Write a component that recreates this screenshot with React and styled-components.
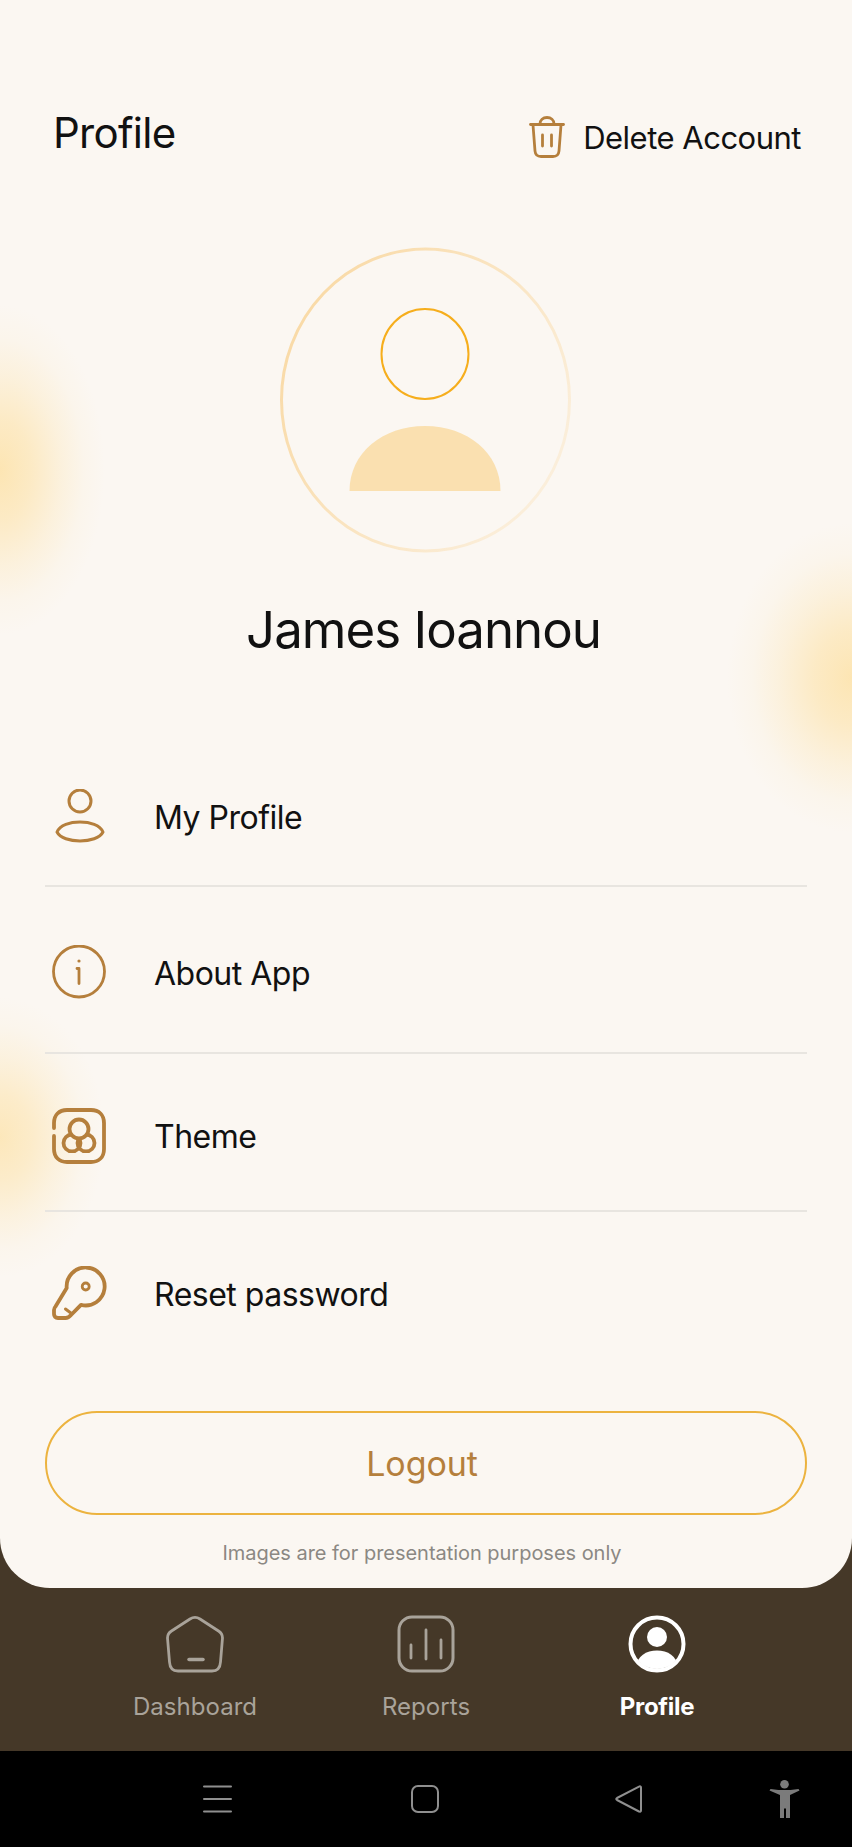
import React from 'react';
import styled, { createGlobalStyle } from 'styled-components';

const GlobalStyle = createGlobalStyle`
  html, body {
    margin: 0;
    padding: 0;
    background: #000;
  }
  body {
    font-family: Inter, "Liberation Sans", sans-serif;
  }
`;

const Page = styled.div`
  width: 852px;
  height: 1847px;
  display: flex;
  flex-direction: column;
  background: #453828;
  overflow: hidden;
`;

const blob = (w, h, x, y, a) => `radial-gradient(ellipse ${w}px ${h}px at ${x} ${y}px,
  rgba(253, 226, 168, ${a}) 0%,
  rgba(253, 226, 168, ${a * 0.72}) 30%,
  rgba(253, 226, 168, ${a * 0.34}) 58%,
  rgba(253, 226, 168, ${a * 0.1}) 80%,
  rgba(253, 226, 168, 0) 100%)`;

const Card = styled.main`
  height: 1588px;
  box-sizing: border-box;
  padding: 104px 45px 0;
  border-radius: 0 0 50px 50px;
  display: flex;
  flex-direction: column;
  background:
    ${blob(105, 165, '0', 470, 0.85)},
    ${blob(125, 155, '852px', 678, 0.85)},
    ${blob(105, 140, '0', 1137, 0.75)},
    #fbf7f2;
`;

const Header = styled.header`
  display: flex;
  justify-content: space-between;
  height: 60px;
  padding-left: 8px;
`;

const Title = styled.h1`
  margin: 0;
  font-size: 42px;
  line-height: 58px;
  font-weight: 400;
  letter-spacing: -0.7px;
  color: #111;
`;

const DeleteButton = styled.button`
  display: flex;
  align-items: center;
  gap: 18px;
  height: 66px;
  margin-right: 6px;
  padding: 0;
  border: 0;
  background: none;
  font: inherit;
  font-size: 31px;
  letter-spacing: -0.5px;
  color: #111;
`;

const AvatarWrap = styled.div`
  display: flex;
  justify-content: center;
  margin-top: 83px;
`;

const Name = styled.h2`
  margin: 47px 5px 0 0;
  text-align: center;
  font-size: 51px;
  line-height: 60px;
  font-weight: 400;
  letter-spacing: -1px;
  color: #111;
`;

const Menu = styled.nav`
  margin-top: 91px;
  display: flex;
  flex-direction: column;
`;

const Row = styled.div`
  height: ${(p) => p.$height}px;
  box-sizing: border-box;
  padding-top: ${(p) => p.$top}px;
  padding-bottom: ${(p) => p.$bottom}px;
  display: flex;
  align-items: center;
  border-bottom: ${(p) => (p.$last ? 'none' : '2px solid #e8e5e0')};
`;

const RowIcon = styled.span`
  width: 109px;
  padding-left: 7px;
  box-sizing: border-box;
  display: flex;
  flex-shrink: 0;
`;

const RowLabel = styled.span`
  font-size: 32px;
  letter-spacing: -0.5px;
  color: #111;
`;

const LogoutButton = styled.button`
  height: 104px;
  margin-top: 33px;
  padding: 0 8px 0 0;
  border: 2px solid #ecb33f;
  border-radius: 52px;
  background: none;
  font: inherit;
  font-size: 34px;
  letter-spacing: -0.1px;
  color: #b57f3c;
`;

const Disclaimer = styled.p`
  margin: 24px 8px 0 0;
  text-align: center;
  font-size: 20px;
  line-height: 28px;
  letter-spacing: -0.03px;
  color: #8b8883;
`;

const BottomNav = styled.div`
  height: 163px;
  display: flex;
  justify-content: center;
  padding-top: 27px;
  box-sizing: border-box;
`;

const NavItem = styled.div`
  width: 231px;
  display: flex;
  flex-direction: column;
  align-items: center;
  gap: 18px;
  color: ${(p) => (p.$active ? '#fff' : '#a9a39a')};
  font-size: 24px;
  line-height: 32px;
  font-weight: ${(p) => (p.$active ? 700 : 400)};
  letter-spacing: ${(p) => (p.$active ? '-0.3px' : '0.05px')};
`;

const SystemBar = styled.div`
  flex: 1;
  background: #000;
  display: flex;
  align-items: center;
  padding-left: 203px;
`;

const SystemButton = styled.span`
  display: flex;
  margin-left: ${(p) => p.$left}px;
`;

const BRONZE = '#b57f3c';

const Stroke = ({ size = 56, color = BRONZE, width = 3, children, w, h }) => (
  <svg
    width={w || size}
    height={h || size}
    viewBox={`0 0 ${w || size} ${h || size}`}
    fill="none"
    stroke={color}
    strokeWidth={width}
    strokeLinecap="round"
    strokeLinejoin="round"
  >
    {children}
  </svg>
);

const TrashIcon = () => (
  <Stroke w={36} h={42} width={2.8}>
    <path d="M1.5 8.5h33" />
    <path d="M11 8c0-4 3-6.500 7-6.500s7 2.500 7 6.500" />
    <path d="M4 9l2 26c.3 3.500 2.500 5.500 6 5.500h12c3.500 0 5.700-2 6-5.500l2-26" />
    <path d="M13.500 19v11M22.500 19v11" />
  </Stroke>
);

const Avatar = () => (
  <svg width="292" height="306" viewBox="0 0 292 306">
    <defs>
      <linearGradient id="ring" x1="0" y1="0.2" x2="1" y2="0.8">
        <stop offset="0" stopColor="#f9d9a4" />
        <stop offset="1" stopColor="#fbf0df" />
      </linearGradient>
    </defs>
    <ellipse cx="145.500" cy="153" rx="144" ry="151" fill="none" stroke="url(#ring)" strokeWidth="3" />
    <ellipse cx="145" cy="107" rx="43.500" ry="45" fill="none" stroke="#f6ae1d" strokeWidth="2" />
    <path d="M69.500 244c0-38 33-65 75.500-65s75.500 27 75.500 65z" fill="#fae0b0" />
  </svg>
);

const UserIcon = () => (
  <Stroke>
    <circle cx="28" cy="12" r="11" />
    <path d="M5 43C8 36 18 33 28 33s20 3 23 10c-3 6-13 9-23 9S8 49 5 43z" />
  </Stroke>
);

const InfoIcon = () => (
  <Stroke width={2.8}>
    <circle cx="27" cy="26.500" r="25.500" />
    <circle cx="27" cy="16" r="1.600" fill={BRONZE} stroke="none" />
    <path d="M25 23.500h2v15" />
  </Stroke>
);

const ThemeIcon = () => (
  <Stroke width={3.8}>
    <defs>
      <mask id="theme-top">
        <rect width="56" height="56" fill="#fff" stroke="none" />
        <circle cx="27" cy="21" r="9.500" fill="#000" stroke="none" />
      </mask>
    </defs>
    <path d="M2 20v-5C2 7 7 2 15 2h24c8 0 13 5 13 13v26c0 8-5 13-13 13H15C7 54 2 49 2 41V28" />
    <circle cx="27" cy="21" r="9.500" />
    <g mask="url(#theme-top)">
      <circle cx="20" cy="35" r="8.500" />
      <circle cx="34" cy="35" r="8.500" />
    </g>
  </Stroke>
);

const KeyIcon = () => (
  <Stroke width={3.8}>
    <path d="M14.700 22A19 19 0 1 1 29 38.900L19 49Q16.500 52 13.500 52H6Q2 52 2 48V44Q2 42 3.500 40.500z" />
    <circle cx="33.700" cy="20.500" r="3.500" strokeWidth="2.800" />
    <path d="M13.500 43l6 4.500" strokeWidth="3" />
  </Stroke>
);

const HomeIcon = () => (
  <Stroke size={58} color="#a9a39a" width={2.800}>
    <path d="M24 4Q29 .8 34 4L52.500 16Q56.500 18.500 56.500 23L54.500 47Q54 56 46 56H12Q4 56 3.500 47L1.500 23Q1.500 18.500 5.500 16z" />
    <path d="M23 44.500h14" strokeWidth="3.500" />
  </Stroke>
);

const ChartIcon = () => (
  <Stroke size={58} color="#a9a39a" width={3}>
    <rect x="2" y="2" width="54" height="54" rx="13" />
    <path d="M14 30v13M29 15v29M44 25v18" strokeWidth="2.800" />
  </Stroke>
);

const ProfileNavIcon = () => (
  <svg width="58" height="58" viewBox="0 0 58 58">
    <defs>
      <clipPath id="inner">
        <circle cx="29" cy="29" r="25" />
      </clipPath>
    </defs>
    <circle cx="29" cy="29" r="26.500" fill="none" stroke="#fff" strokeWidth="4" />
    <circle cx="29" cy="22" r="10" fill="#fff" />
    <ellipse cx="29" cy="50" rx="20" ry="14.500" fill="#fff" clipPath="url(#inner)" />
  </svg>
);

const MenuGlyph = () => (
  <Stroke w={29} h={28} color="#8f8f8f" width={2}>
    <path d="M1 1.500h27M1 14h27M1 26.500h27" />
  </Stroke>
);

const SquareGlyph = () => (
  <Stroke size={28} color="#8f8f8f" width={2}>
    <rect x="1" y="1" width="26" height="26" rx="6" />
  </Stroke>
);

const BackGlyph = () => (
  <Stroke size={28} color="#8f8f8f" width={2}>
    <path d="M26 2.500c0-1-1-1.500-2-.8L2 13c-1 .6-1 1.400 0 2l22 11.500c1 .6 2 0 2-1z" />
  </Stroke>
);

const AccessGlyph = () => (
  <svg width="31" height="39" viewBox="0 0 31 39" fill="#7b7b7b">
    <circle cx="15.500" cy="4.300" r="4.300" />
    <path d="M.5 10.500 1.500 9l8 1h12l8-1 1 1.500-9.500 4.500v23h-4V28.500h-2V38h-4V15z" />
  </svg>
);

const rows = [
  { label: 'My Profile', icon: <UserIcon />, height: 136, top: 0, bottom: 2 },
  { label: 'About App', icon: <InfoIcon />, height: 167, top: 7, bottom: 0 },
  { label: 'Theme', icon: <ThemeIcon />, height: 158, top: 8, bottom: 0 },
  { label: 'Reset password', icon: <KeyIcon />, height: 166, top: 0, bottom: 2, last: true },
];

const tabs = [
  { label: 'Dashboard', icon: <HomeIcon /> },
  { label: 'Reports', icon: <ChartIcon /> },
  { label: 'Profile', icon: <ProfileNavIcon />, active: true },
];

const App = () => (
  <Page>
    <GlobalStyle />
    <Card>
      <Header>
        <Title>Profile</Title>
        <DeleteButton>
          <TrashIcon />
          Delete Account
        </DeleteButton>
      </Header>
      <AvatarWrap>
        <Avatar />
      </AvatarWrap>
      <Name>James Ioannou</Name>
      <Menu>
        {rows.map((row) => (
          <Row key={row.label} $height={row.height} $top={row.top} $bottom={row.bottom} $last={row.last}>
            <RowIcon>{row.icon}</RowIcon>
            <RowLabel>{row.label}</RowLabel>
          </Row>
        ))}
      </Menu>
      <LogoutButton>Logout</LogoutButton>
      <Disclaimer>Images are for presentation purposes only</Disclaimer>
    </Card>
    <BottomNav>
      {tabs.map((tab) => (
        <NavItem key={tab.label} $active={tab.active}>
          {tab.icon}
          {tab.label}
        </NavItem>
      ))}
    </BottomNav>
    <SystemBar>
      <SystemButton $left={0}><MenuGlyph /></SystemButton>
      <SystemButton $left={179}><SquareGlyph /></SystemButton>
      <SystemButton $left={176}><BackGlyph /></SystemButton>
      <SystemButton $left={126}><AccessGlyph /></SystemButton>
    </SystemBar>
  </Page>
);

export default App;
